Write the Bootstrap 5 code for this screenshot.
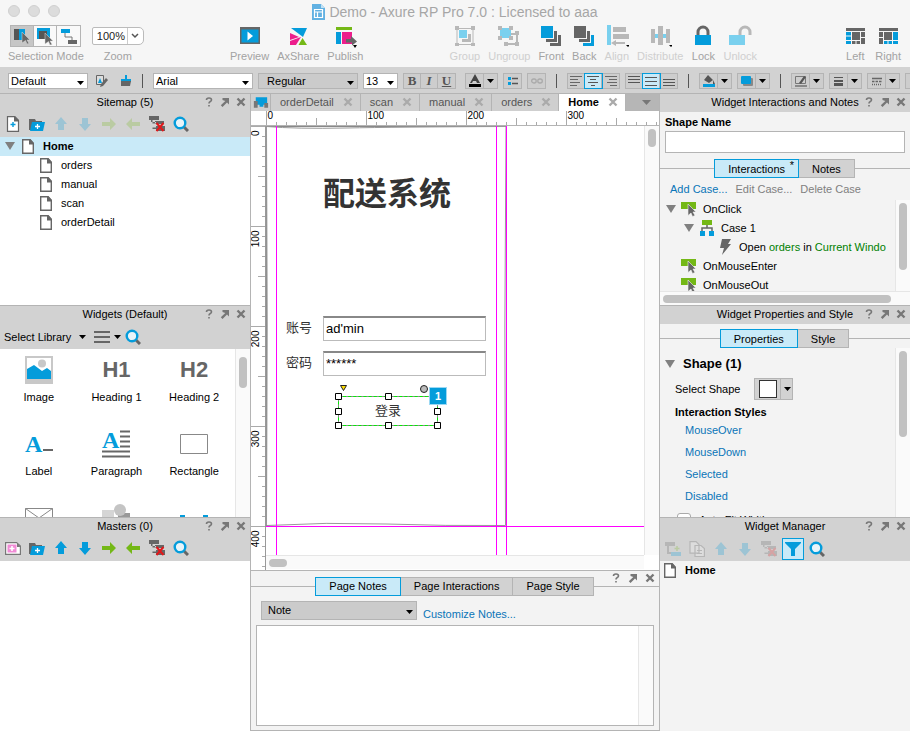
<!DOCTYPE html>
<html lang="en">
<head>
<meta charset="utf-8">
<meta name="viewport" content="width=device-width, initial-scale=1">
<title>Demo - Axure RP Pro 7.0</title>
<link href="https://cdn.jsdelivr.net/npm/bootstrap@5.3.0/dist/css/bootstrap.min.css" rel="stylesheet">
<style>
:root{--line:#b4b4b4;--bar:#d2d2d2;--pane:#f3f3f3;--blue:#049cdb;--pale:#c9eaf8;--ink:#666;--lnk:#0a75b8;--mag:#f0f}
body{font-family:"Liberation Sans","Noto Sans CJK SC",Arial,sans-serif;font-size:11px;line-height:14px;color:#000;background:var(--pane);height:100vh;overflow:hidden}
button,input,select,textarea{font:inherit;color:inherit;border-radius:0}
button{background:none;border:0;padding:0;line-height:14px}
svg{display:block;flex:none}
a{color:var(--lnk);text-decoration:none}
.i12{width:12px;height:12px}.i16{width:16px;height:16px}.i24{width:24px;height:24px}.i28{width:28px;height:28px;overflow:visible}
.pg{width:12px;height:15px}.tri{width:10px;height:8px}.arr{width:7px;height:4px}
/* window top */
.topbar{background:#f6f6f6}
.titleline{height:23px;font-size:14px;color:#a6a6a6}
.dots{left:8px;top:5px}
.dots span{width:12px;height:12px;border-radius:50%;background:#dcdcdc;border:1px solid #d0d0d0}
.tools{height:44px;padding:2px 9px 0 8px;color:#a3a3a3}
.tool{display:flex;flex-direction:column;align-items:center;height:40px}
.tool.off{color:#cfcfcf}
.seg{border:1px solid var(--line);height:22px;margin-bottom:2px}
.seg button{width:23px;height:20px;border-right:1px solid var(--line);background:#f9f9f9;display:grid;place-items:center}
.seg button:last-child{border:0}.seg .sel{background:#c6c6c6}
.sel-box{appearance:none;border:1px solid var(--line);background:#fff url("data:image/svg+xml,%3Csvg xmlns='http://www.w3.org/2000/svg' width='7' height='4'%3E%3Cpath d='M0 0h7L3.500 4z'/%3E%3C/svg%3E") no-repeat right 3px top 7px;padding:0 12px 0 2px;height:16px;line-height:14px}
.zoomsel{height:18px;width:52px;border:1px solid #bbb;border-radius:2px 5px 5px 2px;color:#222;padding:0 0 0 4px;line-height:16px;background:#fff url("data:image/svg+xml,%3Csvg xmlns='http://www.w3.org/2000/svg' width='16' height='16'%3E%3Cpath d='M.5 0v16' stroke='%23ccc'/%3E%3Cpath d='M5 6l3 3 3-3' fill='none' stroke='%23555' stroke-width='1.500'/%3E%3C/svg%3E") no-repeat right 0 top 0;margin:2px 0 4px;appearance:none}
/* format strip */
.fmt{height:26px;background:var(--bar);padding:1px 0 0 8px;gap:5px;overflow:hidden}
.gray{background-color:#cbcbcb}
.w80{width:80px}.w100{width:100px}.w35{width:35px}.w156{width:156px}
.vr1{width:1px;height:14px;background:#555;margin:0 5px}
.bg1{border:1px solid var(--line);height:16px;background:#cdcdcd}
.bg1 button{width:17px;height:14px;display:grid;place-items:center;border-right:1px solid var(--line);font-family:"Liberation Serif",serif;font-weight:bold;font-size:13px;color:#555}
.bg1 button:last-child{border-right:0}
.bg1 .lg{width:18px}.bg1 .ar{width:13px}
.bg1 .on{background:var(--pale);outline:1px solid var(--blue)}
/* panels */
.work{display:grid;grid-template-columns:minmax(190px,250fr) minmax(280px,409fr) minmax(200px,251fr);min-height:0}
.colm{display:flex;flex-direction:column;min-width:0;min-height:0}
.colm+.colm{border-left:1px solid var(--line)}
.pnl{flex:212 1 0;min-height:0;display:flex;flex-direction:column;border-top:1px solid var(--line);overflow:hidden}
.pnl:last-child{flex-grow:214}
.ph{display:grid;grid-template-columns:1fr auto 1fr;align-items:center;height:18px;padding-bottom:2px;background:var(--bar);flex:none}
.ph h2{grid-column:2;font-size:11px;line-height:14px;margin:0;font-weight:400;white-space:nowrap}
.wt{display:flex;justify-content:flex-end;gap:6px;padding-right:4px;color:#777}
.wt svg{width:10px;height:10px}
.tb{height:25px;background:var(--bar);flex:none;padding-left:1px}
.tb button{width:24px;height:24px;display:grid;place-items:center}
.libbar button{height:20px}
.dim{opacity:.25}
.tree{list-style:none;margin:0;padding:0}
.tree li{display:flex;align-items:center;height:19px;padding-bottom:1px;white-space:nowrap}
.lv0{background:var(--pale);padding-left:5px}.lv0 .pg{margin:0 9px 0 7px}
.lv1{padding-left:40px}.lv1 .pg,.wm .pg{margin-right:9px}.wm{padding-left:4px}
.wgrid{display:grid;grid-template-columns:repeat(3,1fr);flex:1;padding-right:2px;overflow:hidden;align-content:start}
.wgrid div{height:74px;padding-top:7px;display:flex;flex-direction:column;align-items:center;gap:6px}
.hh{height:28px;font:bold 22px/28px "Liberation Sans",sans-serif;color:var(--ink)}
.vs{width:15px;flex:none;background:#fafafa;border-left:1px solid #e6e6e6;padding:3px 3px}
.vs span,.hs span{display:block;border-radius:4px;background:#c1c1c1}
.vs span{width:8px}.hs{height:14px;flex:none;background:#fafafa;border-top:1px solid #e6e6e6;padding:3px}
.hs span{height:8px}
.tabsline{display:flex;justify-content:center;position:relative;flex:none}
.tabsline::before{content:"";position:absolute;left:0;right:0;top:9px;border-top:1px solid var(--line)}
.tabsline button{position:relative;height:19px;border:1px solid var(--line);background:var(--bar);padding:0 13px;margin-left:-1px}
.tabsline .on{background:var(--pale);border-color:var(--blue);z-index:1}
.star{position:absolute;right:4px;top:-2px}
.nm{padding:3px 5px 0}
.name-in{height:22px;border:1px solid var(--line);background:#fff;margin:2px 5px 6px;flex:none}
.acts{height:22px;padding-left:10px;color:#808080}
.ev svg.tri{margin:0 5px 0 6px}.ev .i16{margin-right:6px}.e1{padding-left:18px}.e2{padding-left:57px}.ev .e3{padding-left:21px}
.grn{color:#008000}.pt5{margin-top:5px}
.fs13{font-size:13px}
.sh{height:32px;padding-left:5px}.ind{padding-left:15px}.selrow{height:18px;gap:14px}
.lk{padding-left:25px}
.lk li{height:22px;display:flex;align-items:center}
.shp{border:1px solid var(--line);background:var(--bar);height:22px;width:39px}
.shp i{width:18px;height:18px;border:1px solid #333;background:#fff;margin-left:4px}
.shp b{width:1px;height:20px;background:var(--line);margin:0 3px}
.h6x{font-size:11px;line-height:14px;margin:0;padding-top:7px;font-weight:bold}
.afw{padding-left:17px;height:26px}
.chk{width:14px;height:14px;margin:0;appearance:none;border:1px solid #aaa;border-radius:3px;background:#fff}
.tb .filt{border:1px solid var(--blue);background:var(--pale);height:22px;width:22px;margin:0 1px}
/* document tabs and canvas */
.edge{border-top:1px solid var(--line)}
.dtabs{height:17px;background:#b6b6b6;color:#555;flex:none}
.dtab{display:flex;align-items:center;gap:9px;height:17px;padding:0 7px 1px 9px;background:#cfcfcf;border-right:1px solid var(--line)}
.dtab svg{width:10px;height:10px;color:#aaa}
.dtab .dev{width:19px;height:14px}
.dtab.cur{background:#fff;color:#000;font-weight:bold}
.cv{display:grid;grid-template:15px 1fr 15px/15px 1fr 15px;flex:1;min-height:0;background:#fff}
.rh{grid-column:1/4;border-bottom:1px solid var(--line);width:100%;height:15px}
.rv{border-right:1px solid #999;width:15px;height:100%;grid-row:2/4;min-height:0}
.stage{position:relative;overflow:hidden;min-width:0;min-height:0;color:#333}
.stage>*{position:absolute}
.gv{width:1px;top:0;bottom:0;background:var(--mag)}.gh{height:1px;left:0;right:0;top:400px;background:var(--mag)}
.x10{left:10px}.x230{left:230px}.x240{left:240px}
.sys{left:57px;top:42px;font:bold 32px/46px "Noto Sans CJK SC",sans-serif;margin:0;white-space:nowrap}
.fl{left:20px;font-size:13px;line-height:18px}
.fi{left:57px;width:163px;height:25px;border:1px solid #bbb;border-top:2px solid #888;background:#fff;padding:0 2px 2px;font-size:13px;color:#000}
.r1{top:190px}.r2{top:225px}.l1{top:193px}.l2{top:228px}
.login{left:72px;top:270px;width:100px;height:30px;font-size:13px;border:1px dashed #0e0;background:linear-gradient(#fff,#fff) padding-box,#888 border-box}
.hand{left:68px;top:258px}
.note1{left:163px;top:261px;width:18px;height:18px;background:var(--blue);border:1px solid #9bd8f3;color:#fff;font-weight:bold;line-height:16px;text-align:center}
.notes{flex:none;height:25.300%;background:var(--pane);border-top:1px solid var(--line);border-bottom:1px solid var(--line);position:relative}
.notes .wt{position:absolute;right:0;top:2px;gap:7px}
.nt{padding-top:6px}.nt::before{top:15px}
.nrow{padding-left:10px;gap:6px;margin-top:5px;height:19px}.nrow a{margin-top:6px}
.nsel{height:19px;padding-left:6px;background-position:right 3px top 8px}
.ntext{display:flex;border:1px solid var(--line);background:#fff;margin:5px 5px 4px;flex:1;min-height:0}
.ntext textarea{flex:1;border:0;resize:none;background:#fff;outline:0;min-width:0}
</style>
</head>
<body class="d-flex flex-column">
<svg width="0" height="0" class="position-absolute" aria-hidden="true">
<symbol id="q" viewBox="0 0 10 10"><path d="M2.500 3Q2.500 1 5 1T7.500 3Q7.500 4 6 4.800Q5 5.300 5 6.500M5 8v1.500" fill="none" stroke="currentColor" stroke-width="1.600"/></symbol>
<symbol id="pop" viewBox="0 0 10 10"><path d="M2.500 1H9v6.500L7 5.500 2.500 10 .800 8.300 5.300 4 2.500 3z" fill="currentColor"/></symbol>
<symbol id="x" viewBox="0 0 10 10"><path d="M1.500 1.500l7 7M8.500 1.500l-7 7" stroke="currentColor" stroke-width="2.400"/></symbol>
<symbol id="tri" viewBox="0 0 10 8"><path d="M0 0h10L5 8z" fill="#808080"/></symbol>
<symbol id="arr" viewBox="0 0 7 4"><path d="M0 0h7L3.500 4z"/></symbol>
<symbol id="page" viewBox="0 0 12 15"><path d="M.700.700h7L11.300 4.500v9.800H.700z" fill="#fff" stroke="#666" stroke-width="1.400"/><path d="M7 0h1.500L12 4v1.500H7z" fill="#666"/></symbol>
<symbol id="addpage" viewBox="0 0 16 16"><path d="M2.500.700h7l4 4v10.600h-11z" fill="#fff" stroke="#666" stroke-width="1.200"/><path d="M9 0h1l4 4v1.500H9z" fill="#666"/><path d="M8 6v5M5.500 8.500h5" stroke="#049cdb" stroke-width="1.400"/></symbol>
<symbol id="folder" viewBox="0 0 16 16"><path d="M0 3h6l1 2h6v9H0z" fill="#666"/><path d="M3 6h13l-2 9H1z" fill="#049cdb"/><path d="M8.500 8v5M6 10.500h5" stroke="#fff" stroke-width="1.300"/></symbol>
<symbol id="up" viewBox="0 0 16 16"><path d="M8 1l6 7h-3v6H5V8H2z" fill="#049cdb"/></symbol>
<symbol id="dn" viewBox="0 0 16 16"><path d="M8 15L2 8h3V2h6v6h3z" fill="#049cdb"/></symbol>
<symbol id="rt" viewBox="0 0 16 16"><path d="M15 8L9 14v-4H1V6h8V2z" fill="#74b816"/></symbol>
<symbol id="lt" viewBox="0 0 16 16"><path d="M1 8l6-6v4h8v4H7v4z" fill="#74b816"/></symbol>
<symbol id="del" viewBox="0 0 16 16"><path d="M0 0h10v4H0zM2 4h1.500v9H7v-1.500H3.500V7.500H7V6H2zM6 5h9v3H6zM7 10h9v5H7z" fill="#666"/><path d="M7.500 7l7 8M14.500 7l-7 8" stroke="#e3171a" stroke-width="2"/></symbol>
<symbol id="find" viewBox="0 0 16 16"><path d="M10.500 10.500l4.500 4.500" stroke="#666" stroke-width="3"/><circle cx="7" cy="7" r="5.300" fill="#e8f4f9" stroke="#049cdb" stroke-width="2.400"/></symbol>
<symbol id="addm" viewBox="0 0 16 16"><path d="M.600 2.600h11l3.800 3.500v8.300H.600z" fill="#fff" stroke="#777" stroke-width="1.200"/><path d="M2.500 4.500h9v8h-9z" fill="#f08bd5"/><path d="M12 3v4h3.500z" fill="#777"/><path d="M7 6v5M4.500 8.500h5" stroke="#fff" stroke-width="1.600"/></symbol>
<symbol id="evt" viewBox="0 0 16 16"><path d="M0 1h15v7H0z" fill="#74b816"/><path d="M7 3l8 8h-3l2 3.500-2.500 1-1.500-3.500-3 2.500z" fill="#666" stroke="#f3f3f3" stroke-width=".6"/></symbol>
<symbol id="case" viewBox="0 0 16 16"><path d="M3 0h10v5H3z" fill="#74b816"/><path d="M8 5v3M3 12V8h10v4" fill="none" stroke="#666" stroke-width="1.500"/><path d="M1 11h5v5H1zM10 11h5v5h-5z" fill="#049cdb"/></symbol>
<symbol id="bolt" viewBox="0 0 16 16"><path d="M5 0h9l-3 5h3L5 16l2-7H3z" fill="#666"/></symbol>
<symbol id="cur" viewBox="0 0 10 12"><path d="M1 0l8 8H6l2 3.500-2 .5-1.500-3.500L1 11z" fill="#666" stroke="#ddd" stroke-width=".5"/></symbol>
</svg>

<header class="topbar flex-shrink-0">
  <div class="titleline position-relative d-flex justify-content-center align-items-center gap-1">
    <div class="dots position-absolute d-flex gap-2"><span></span><span></span><span></span></div>
    <svg width="13" height="16" viewBox="0 0 13 16"><path d="M0 0h9l4 4v12H0z" fill="#62b1e2"/><path d="M2.500 5.500h8v8h-8zM2.500 8h8M5.500 8v5.500" fill="none" stroke="#fff" stroke-width="1.200"/><path d="M9 0v4h4z" fill="#c3e2f4"/></svg>
    <span>Demo - Axure RP Pro 7.0 : Licensed to aaa</span>
  </div>
  <div class="tools d-flex justify-content-between">
    <div class="d-flex gap-2">
      <div class="tool"><div class="seg d-flex">
        <button class="sel" aria-label="Select intersected"><svg width="18" height="18" viewBox="0 0 18 18"><path d="M1 2h7v11H1z" fill="#555"/><path d="M6 2h6v11H6z" fill="#049cdb"/><use href="#cur" x="8" y="5" width="10" height="12"/></svg></button>
        <button aria-label="Select contained"><svg width="18" height="18" viewBox="0 0 18 18"><path d="M1 1h13v11H1z" fill="#049cdb"/><path d="M3 4h8v8H3z" fill="#555"/><use href="#cur" x="8" y="6" width="10" height="12"/></svg></button>
        <button aria-label="Connector"><svg width="18" height="18" viewBox="0 0 18 18"><path d="M1 2h9v4H1z" fill="#049cdb"/><path d="M5 6v4h7v4" fill="none" stroke="#777"/><path d="M8 13h9v4H8z" fill="#666"/></svg></button></div>
        <span>Selection Mode</span></div>
      <div class="tool"><select class="zoomsel" id="zm"><option>100%</option></select><label for="zm">Zoom</label></div>
    </div>
    <div class="d-flex gap-2">
      <button class="tool"><svg class="i24" viewBox="0 0 24 24"><path d="M2 2h20v17H2z" fill="#666"/><path d="M3.500 4.500h17v13h-17z" fill="#049cdb"/><path d="M9.500 6.500l5.500 4.500-5.500 4.500z" fill="#fff"/></svg>Preview</button>
      <button class="tool"><svg class="i24" viewBox="0 0 24 24"><path d="M5 3h16l-4 9z" fill="#049cdb"/><path d="M4 8l9 4-9 3zM4 20v-4l11-4-5 8z" fill="#ec1e8c"/><path d="M16.500 13l-4 7H21z" fill="#74b816"/></svg>AxShare</button>
      <button class="tool"><svg class="i24" viewBox="0 0 24 24"><path d="M3 2h16v3H3z" fill="#74b816"/><path d="M3 7h5v12H3z" fill="#049cdb"/><path d="M9 7h10v12H9z" fill="#ec1e8c"/><path d="M13 14h5v-3l6 5.500-5 4v-3h-6z" fill="#666"/><path d="M20 20h4l-2 3z"/></svg>Publish</button>
    </div>
    <div class="d-flex gap-2">
      <button class="tool off" disabled><svg class="i24" viewBox="0 0 24 24"><path d="M4 3.500h16v16H4z" fill="none" stroke="#b8b8b8"/><path d="M2 1h4v4H2zM18 1h4v4h-4zM2 18h4v3H2zM18 18h4v3h-4zM15 9h3v8H9v-3h6z" fill="#b8b8b8"/><path d="M6 5h8v8H6z" fill="#7ad0ee"/></svg>Group</button>
      <button class="tool off" disabled><svg class="i24" viewBox="0 0 24 24"><path d="M3 3h11v10H3z" fill="#7ad0ee"/><path d="M1 1h4v4H1zM12 1h4v4h-4zM1 11h4v4H1zM12 11h4v4h-4zM18 6h4v4h-4zM7 17h4v4H7zM18 17h4v4h-4zM11 18h7v2h-7zM19 9h2v9h-2zM14 8h4v2h-4z" fill="#b8b8b8"/></svg>Ungroup</button>
      <button class="tool"><svg class="i24" viewBox="0 0 24 24"><path d="M2 1h12v12H2z" fill="#049cdb"/><path d="M15 6h3v11H7v-3h8zM19 10h3v11H11v-3h8z" fill="#666"/></svg>Front</button>
      <button class="tool"><svg class="i24" viewBox="0 0 24 24"><path d="M2 1h12v12H2zM15 6h3v11H7v-3h8z" fill="#666"/><path d="M19 10h3v11H11v-3h8z" fill="#049cdb"/></svg>Back</button>
      <button class="tool off" disabled><svg class="i24" viewBox="0 0 24 24"><path d="M2 0h4v20H2z" fill="#7ad0ee"/><path d="M8 2h13v5H8zM8 9h16v5H8zM6 18l5-3v2h9v2h-9v2z" fill="#b8b8b8"/><path d="M21 20h4l-2 2z"/></svg>Align</button>
      <button class="tool off" disabled><svg class="i24" viewBox="0 0 24 24"><path d="M3 9h18v4H3z" fill="#7ad0ee"/><path d="M3 4h4v14H3zM10 1h5v19h-5zM18 4h4v14h-4z" fill="#b8b8b8"/><path d="M21 20h4l-2 2z"/></svg>Distribute</button>
      <button class="tool"><svg class="i24" viewBox="0 0 24 24"><path d="M7 11V7a5 5 0 0 1 10 0v4" fill="none" stroke="#666" stroke-width="3"/><path d="M4 10h16v10H4z" fill="#049cdb"/></svg>Lock</button>
      <button class="tool off" disabled><svg class="i24" viewBox="0 0 24 24"><path d="M12 11V7a5 5 0 0 1 10 0v3" fill="none" stroke="#b8b8b8" stroke-width="3"/><path d="M1 10h16v10H1z" fill="#7ad0ee"/></svg>Unlock</button>
    </div>
    <div class="d-flex gap-2">
      <button class="tool"><svg class="i24" viewBox="0 0 24 24"><path d="M3 3h19v3H3zM9 7h8v8H9zM18 7h4v5h-4zM18 13h4v6h-4zM9 16h3.500v3H9zM13.500 16H17v3h-3.500z" fill="#666"/><path d="M3 7h5v3.500H3zM3 11.500h5V15H3zM3 16h5v3H3z" fill="#049cdb"/></svg>Left</button>
      <button class="tool"><svg class="i24" viewBox="0 0 24 24"><path d="M3 3h19v3H3zM3 7h4v5H3zM3 13h4v6H3zM8 7h8v8H8z" fill="#666"/><path d="M17 7h5v8h-5zM8 16h3.500v3H8zM12.500 16H16v3h-3.500zM17 16h5v3h-5z" fill="#049cdb"/></svg>Right</button>
    </div>
  </div>
</header>

<div class="fmt d-flex flex-shrink-0 align-items-center">
  <div class="d-flex align-items-center gap-1 flex-shrink-0">
  <select class="sel-box w80" aria-label="Style"><option>Default</option></select>
  <button class="ms-1" aria-label="Edit style"><svg class="i12" viewBox="0 0 12 12"><path d="M.500.500h7v9h-7z" fill="#ddd" stroke="#666"/><path d="M4 12l1-3 5-6 2 2-5 6z" fill="#666"/><path d="M2 8l2-5 2 5z" fill="#049cdb"/></svg></button>
  <button class="ms-2" aria-label="Format painter"><svg class="i12" viewBox="0 0 12 12"><path d="M5 0h2v4h4v3H1V4h4z" fill="#049cdb"/><path d="M1 6h10l-1 5H1z" fill="#666"/></svg></button>
  </div>
  <span class="vr1 flex-shrink-0"></span>
  <select class="sel-box w100 flex-shrink-0" aria-label="Font"><option>Arial</option></select>
  <select class="sel-box gray w100 flex-shrink-0" aria-label="Weight"><option>&nbsp; Regular</option></select>
  <select class="sel-box w35 flex-shrink-0" aria-label="Size"><option>13</option></select>
  <div class="bg1 d-flex flex-shrink-0"><button>B</button><button class="fst-italic">I</button><button class="text-decoration-underline">U</button></div>
  <div class="bg1 d-flex flex-shrink-0 ms-1"><button class="lg" aria-label="Text color"><svg width="14" height="13" viewBox="0 0 14 13"><path d="M7 0l5 9H9L8 7H5L4 9H2z" fill="#444"/><path d="M1 10h12v3H1z"/></svg></button><button class="ar" aria-label="More"><svg class="arr"><use href="#arr"/></svg></button></div>
  <div class="bg1 d-flex flex-shrink-0"><button aria-label="Bullets"><svg class="i12" viewBox="0 0 12 12"><path d="M1 2h3v3H1zM1 7h3v3H1z" fill="#049cdb"/><path d="M5 3.500h6M5 8.500h6" stroke="#555" stroke-width="1.500"/></svg></button></div>
  <div class="bg1 d-flex flex-shrink-0"><button aria-label="Link"><svg class="i12" viewBox="0 0 12 12"><rect x=".7" y="4" width="4.500" height="4" rx="2" fill="none" stroke="#aaa" stroke-width="1.300"/><rect x="6.800" y="4" width="4.500" height="4" rx="2" fill="none" stroke="#aaa" stroke-width="1.300"/></svg></button></div>
  <span class="vr1 flex-shrink-0"></span>
  <div class="bg1 d-flex flex-shrink-0"><button aria-label="Align left"><svg class="i12"><path d="M0 1.500h12M0 4.500h8M0 7.500h10M0 10.500h7" stroke="#666"/></svg></button><button class="on" aria-label="Align center"><svg class="i12"><path d="M0 1.500h12M3 4.500h6M1 7.500h10M4 10.500h4" stroke="#555"/></svg></button><button aria-label="Align right"><svg class="i12"><path d="M0 1.500h12M4 4.500h8M2 7.500h10M5 10.500h7" stroke="#666"/></svg></button></div>
  <div class="bg1 d-flex flex-shrink-0"><button aria-label="Top"><svg class="i12"><path d="M0 1.500h12M0 4.500h12M0 7.500h12" stroke="#555"/></svg></button><button class="on" aria-label="Middle"><svg class="i12"><path d="M0 2.500h12M0 6.500h12M0 10.500h12" stroke="#555"/></svg></button><button aria-label="Bottom"><svg class="i12"><path d="M0 4.500h12M0 7.500h12M0 10.500h12" stroke="#555"/></svg></button></div>
  <span class="vr1 flex-shrink-0"></span>
  <div class="bg1 d-flex flex-shrink-0"><button class="lg" aria-label="Fill"><svg class="i12" viewBox="0 0 12 12"><path d="M5 0l5 5-4 3-5-3zM10 5l2 4H10z" fill="#555"/><path d="M0 9h12v3H0z" fill="#049cdb"/></svg></button><button class="ar" aria-label="More"><svg class="arr"><use href="#arr"/></svg></button></div>
  <div class="bg1 d-flex flex-shrink-0"><button class="lg" aria-label="Shadow"><svg class="i12" viewBox="0 0 12 12"><rect x="2" y="3" width="10" height="8" rx="1" fill="#888"/><rect y="1" width="10" height="8" rx="1" fill="#049cdb"/></svg></button><button class="ar" aria-label="More"><svg class="arr"><use href="#arr"/></svg></button></div>
  <span class="vr1 flex-shrink-0"></span>
  <div class="bg1 d-flex flex-shrink-0"><button class="lg" aria-label="Line color"><svg class="i12" viewBox="0 0 12 12"><path d="M.500 1.500h10v7H.500z" fill="none" stroke="#777"/><path d="M4 8l5-7 2 1-5 7z" fill="#555"/><path d="M0 10h12v2H0z" fill="#888"/></svg></button><button class="ar" aria-label="More"><svg class="arr"><use href="#arr"/></svg></button></div>
  <div class="bg1 d-flex flex-shrink-0"><button class="lg" aria-label="Line width"><svg class="i12" viewBox="0 0 12 12"><path d="M1 2h9v1H1zM1 5h9v2H1zM1 8h9v3H1z" fill="#555"/></svg></button><button class="ar" aria-label="More"><svg class="arr"><use href="#arr"/></svg></button></div>
  <div class="bg1 d-flex flex-shrink-0"><button class="lg" aria-label="Line style"><svg class="i12" viewBox="0 0 12 12"><path d="M1 3.500h10M1 6.500h2.500m1 0h2.500m1 0h2.500M1 9.500h1m1 0h1m1 0h1m1 0h1m1 0h1" stroke="#666" stroke-width="1.500"/></svg></button><button class="ar" aria-label="More"><svg class="arr"><use href="#arr"/></svg></button></div>
  <div class="bg1 d-flex flex-shrink-0"><button class="lg" aria-label="Arrow style"></button></div>
</div>

<main class="work flex-grow-1">
  <div class="colm">
    <section class="pnl bg-white">
      <div class="ph"><h2>Sitemap (5)</h2><div class="wt"><svg><use href="#q"/></svg><svg><use href="#pop"/></svg><svg><use href="#x"/></svg></div></div>
      <div class="tb d-flex"><button aria-label="Add page"><svg class="i16"><use href="#addpage"/></svg></button><button aria-label="Add folder"><svg class="i16"><use href="#folder"/></svg></button><button aria-label="Up" class="dim"><svg class="i16"><use href="#up"/></svg></button><button aria-label="Down" class="dim"><svg class="i16"><use href="#dn"/></svg></button><button aria-label="Indent" class="dim"><svg class="i16"><use href="#rt"/></svg></button><button aria-label="Outdent" class="dim"><svg class="i16"><use href="#lt"/></svg></button><button aria-label="Delete"><svg class="i16"><use href="#del"/></svg></button><button aria-label="Search"><svg class="i16"><use href="#find"/></svg></button></div>
      <ul class="tree">
        <li class="fw-bold lv0"><svg class="tri"><use href="#tri"/></svg><svg class="pg"><use href="#page"/></svg>Home</li>
        <li class="lv1"><svg class="pg"><use href="#page"/></svg>orders</li>
        <li class="lv1"><svg class="pg"><use href="#page"/></svg>manual</li>
        <li class="lv1"><svg class="pg"><use href="#page"/></svg>scan</li>
        <li class="lv1"><svg class="pg"><use href="#page"/></svg>orderDetail</li>
      </ul>
    </section>
    <section class="pnl bg-white">
      <div class="ph"><h2>Widgets (Default)</h2><div class="wt"><svg><use href="#q"/></svg><svg><use href="#pop"/></svg><svg><use href="#x"/></svg></div></div>
      <div class="tb d-flex align-items-center ps-1 libbar"><button class="d-flex align-items-center w-auto gap-2">Select Library<svg class="arr"><use href="#arr"/></svg></button><button class="d-flex align-items-center w-auto gap-1 ms-2" aria-label="Library menu"><svg width="16" height="14"><path d="M0 2h16M0 7h16M0 12h16" stroke="#666" stroke-width="2"/></svg><svg class="arr"><use href="#arr"/></svg></button><button aria-label="Search"><svg class="i16"><use href="#find"/></svg></button></div>
      <div class="d-flex flex-grow-1 overflow-hidden">
        <div class="wgrid">
          <div><svg class="i28" viewBox="0 0 28 28"><path d="M0 0h28v28H0z" fill="#c8c8c8"/><path d="M2 2h24v21H2z" fill="#fff"/><circle cx="17" cy="7.500" r="4" fill="#c8c8c8"/><path d="M2 13l7-4 8 6 5-3 4 3v8H2z" fill="#049cdb"/></svg>Image</div>
          <div><span class="hh">H1</span>Heading 1</div>
          <div><span class="hh">H2</span>Heading 2</div>
          <div><svg class="i28" viewBox="0 0 28 28"><text x="0" y="22" font-family="Liberation Serif" font-weight="bold" font-size="24" fill="#049cdb">A</text><path d="M18 19h10v2H18z" fill="#666"/></svg>Label</div>
          <div><svg class="i28" viewBox="0 0 28 28"><text x="0" y="18" font-family="Liberation Serif" font-weight="bold" font-size="24" fill="#049cdb">A</text><path d="M18 1.500h10M18 6.500h10M18 11.500h10M18 16.500h10M0 21.500h28M0 26.500h28" stroke="#666" stroke-width="2"/></svg>Paragraph</div>
          <div><svg class="i28" viewBox="0 0 28 28"><path d="M.500 4.500h27v19H.500z" fill="#fff" stroke="#888"/></svg>Rectangle</div>
          <div><svg class="i28" viewBox="0 0 28 28"><path d="M.500 4.500h27v18H.500zM.500 4.500L14 14l13.500-9.500" fill="#fff" stroke="#888"/></svg></div>
          <div><svg class="i28" viewBox="0 0 28 28"><path d="M0 6h12v16H0z" fill="#d5d5d5"/><path d="M16 9h12v13H16z" fill="#999"/><circle cx="18" cy="6" r="6" fill="#c4c4c4"/></svg></div>
          <div><svg class="i28" viewBox="0 0 28 28"><path d="M0 11h5v8H0zM23 11h5v8h-5z" fill="#049cdb"/></svg></div>
        </div>
        <div class="vs pt-2"><span style="height:31px"></span></div>
      </div>
    </section>
    <section class="pnl bg-white">
      <div class="ph"><h2>Masters (0)</h2><div class="wt"><svg><use href="#q"/></svg><svg><use href="#pop"/></svg><svg><use href="#x"/></svg></div></div>
      <div class="tb d-flex"><button aria-label="Add master"><svg class="i16"><use href="#addm"/></svg></button><button aria-label="Add folder"><svg class="i16"><use href="#folder"/></svg></button><button aria-label="Up"><svg class="i16"><use href="#up"/></svg></button><button aria-label="Down"><svg class="i16"><use href="#dn"/></svg></button><button aria-label="Indent"><svg class="i16"><use href="#rt"/></svg></button><button aria-label="Outdent"><svg class="i16"><use href="#lt"/></svg></button><button aria-label="Delete"><svg class="i16"><use href="#del"/></svg></button><button aria-label="Search"><svg class="i16"><use href="#find"/></svg></button></div>
    </section>
  </div>

  <div class="colm">
    <div class="d-flex flex-column flex-grow-1 overflow-hidden edge">
      <div class="dtabs d-flex">
        <div class="dtab px-0"><svg class="dev" viewBox="0 0 20 14"><path d="M5 2h12v8H5zM9 10h4v2H9z" fill="#049cdb"/><path d="M3 6h4v7H3zM14 8h4v5h-4z" fill="#777"/></svg></div>
        <div class="dtab">orderDetail<svg><use href="#x"/></svg></div><div class="dtab">scan<svg><use href="#x"/></svg></div><div class="dtab">manual<svg><use href="#x"/></svg></div><div class="dtab">orders<svg><use href="#x"/></svg></div><div class="dtab cur">Home<svg><use href="#x"/></svg></div>
        <button class="ms-auto px-2" aria-label="Tab list"><svg width="9" height="5"><path d="M0 0h9L4.500 5z" fill="#777"/></svg></button>
      </div>
      <div class="cv">
        <svg class="rh" id="rh" aria-hidden="true"></svg>
        <svg class="rv" id="rv" aria-hidden="true"></svg>
        <div class="stage">
          <svg width="242" height="402"><path d="M0 .500h240M.500 0v400" stroke="#888"/><path d="M.500.500Q30 3 80 2T240 .500Q238 200 239.500 399.500Q180 400 120 398T.500 399.500Q2 200 .500.500z" fill="none" stroke="#999"/></svg>
          <div class="gv x10"></div><div class="gv x230"></div><div class="gv x240"></div><div class="gh"></div>
          <h1 class="sys">配送系统</h1>
          <label class="fl l1" for="acc">账号</label><input class="fi r1" id="acc" value="ad'min">
          <label class="fl l2" for="pw">密码</label><input class="fi r2" id="pw" value="******">
          <button class="login">登录</button>
          <svg class="hand" width="110" height="46" aria-hidden="true"><path d="M6.500 1.500h6l-3 5z" fill="#fd0" stroke="#222"/><circle cx="90" cy="5" r="3.500" fill="#bbb" stroke="#222"/><g fill="#fff" stroke="#000"><path d="M1.500 9.500h6v6h-6zM51.500 9.500h6v6h-6zM1.500 24.500h6v6h-6zM100.500 24.500h6v6h-6zM1.500 38.500h6v6h-6zM51.500 38.500h6v6h-6zM100.500 38.500h6v6h-6z"/></g></svg>
          <div class="note1">1</div>
        </div>
        <div class="vs"><span style="height:18px"></span></div>
        <div class="hs"><span style="width:18px"></span></div>
      </div>
    </div>
    <section class="notes d-flex flex-column">
      <div class="tabsline nt"><button class="on">Page Notes</button><button>Page Interactions</button><button>Page Style</button></div>
      <div class="wt"><svg><use href="#q"/></svg><svg><use href="#pop"/></svg><svg><use href="#x"/></svg></div>
      <div class="d-flex nrow"><select class="sel-box gray w156 nsel" aria-label="Note field"><option>Note</option></select><a href="#">Customize Notes...</a></div>
      <div class="ntext"><textarea aria-label="Note text"></textarea><div class="vs"></div></div>
    </section>
  </div>

  <div class="colm">
    <section class="pnl">
      <div class="ph"><h2>Widget Interactions and Notes</h2><div class="wt"><svg><use href="#q"/></svg><svg><use href="#pop"/></svg><svg><use href="#x"/></svg></div></div>
      <label class="fw-bold nm" for="sn">Shape Name</label>
      <input class="name-in" id="sn">
      <div class="tabsline"><button class="on">Interactions<span class="star">*</span></button><button>Notes</button></div>
      <div class="acts d-flex gap-2 align-items-center flex-shrink-0"><a href="#">Add Case...</a><span>Edit Case...</span><span>Delete Case</span></div>
      <div class="d-flex flex-grow-1 overflow-hidden">
        <ul class="tree ev flex-grow-1 overflow-hidden">
          <li class="e0"><svg class="tri"><use href="#tri"/></svg><svg class="i16"><use href="#evt"/></svg>OnClick</li>
          <li class="e1"><svg class="tri"><use href="#tri"/></svg><svg class="i16"><use href="#case"/></svg>Case 1</li>
          <li class="e2"><svg class="i16"><use href="#bolt"/></svg><span>Open <span class="grn">orders</span> in <span class="grn">Current Windo</span></span></li>
          <li class="e3"><svg class="i16"><use href="#evt"/></svg>OnMouseEnter</li>
          <li class="e3"><svg class="i16"><use href="#evt"/></svg>OnMouseOut</li>
        </ul>
        <div class="vs"><span style="height:67px"></span></div>
      </div>
      <div class="hs"><span style="width:93.500%"></span></div>
    </section>
    <section class="pnl">
      <div class="ph"><h2>Widget Properties and Style</h2><div class="wt"><svg><use href="#q"/></svg><svg><use href="#pop"/></svg><svg><use href="#x"/></svg></div></div>
      <div class="tabsline pt5"><button class="on">Properties</button><button>Style</button></div>
      <div class="d-flex flex-grow-1 overflow-hidden">
        <div class="flex-grow-1 overflow-hidden">
          <div class="d-flex align-items-center gap-2 fw-bold fs13 sh"><svg class="tri"><use href="#tri"/></svg>Shape (1)</div>
          <div class="d-flex align-items-center ind selrow">Select Shape<button class="shp d-flex align-items-center" aria-label="Choose shape"><i></i><b></b><svg class="arr"><use href="#arr"/></svg></button></div>
          <h3 class="h6x ind">Interaction Styles</h3>
          <ul class="list-unstyled m-0 lk"><li><a href="#">MouseOver</a></li><li><a href="#">MouseDown</a></li><li><a href="#">Selected</a></li><li><a href="#">Disabled</a></li></ul>
          <div class="d-flex align-items-center gap-2 afw"><input type="checkbox" class="chk" id="af"><label for="af">Auto Fit Width</label></div>
        </div>
        <div class="vs"><span style="height:86px"></span></div>
      </div>
    </section>
    <section class="pnl">
      <div class="ph"><h2>Widget Manager</h2><div class="wt"><svg><use href="#q"/></svg><svg><use href="#pop"/></svg><svg><use href="#x"/></svg></div></div>
      <div class="tb d-flex align-items-center"><button class="dim" aria-label="Add state"><svg class="i16" viewBox="0 0 16 16"><path d="M0 1h10v4H0zM2 5h2v6h3v2H2z" fill="#666"/><path d="M6 11h10v4H6z" fill="#049cdb"/><path d="M12 5v5M9.500 7.500h5" stroke="#74b816" stroke-width="1.500"/></svg></button><button class="dim" aria-label="Duplicate"><svg class="i16" viewBox="0 0 16 16"><path d="M1 .600h6l3 3v8.500H1zM6 4.500h6l3.400 3v8H6z" fill="#fff" stroke="#666" stroke-width="1.200"/><path d="M8 9.500h5M8 12.500h5" stroke="#666"/></svg></button><button class="dim" aria-label="Up"><svg class="i16"><use href="#up"/></svg></button><button class="dim" aria-label="Down"><svg class="i16"><use href="#dn"/></svg></button><button class="dim" aria-label="Delete"><svg class="i16"><use href="#del"/></svg></button><button class="filt" aria-label="Filter"><svg class="i16" viewBox="0 0 16 16"><path d="M0 1h16v1L10 8v7H6V8L0 2z" fill="#049cdb"/></svg></button><button aria-label="Search"><svg class="i16"><use href="#find"/></svg></button></div>
      <ul class="tree"><li class="fw-bold wm"><svg class="pg"><use href="#page"/></svg>Home</li></ul>
    </section>
  </div>
</main>
<script src="https://cdn.jsdelivr.net/npm/bootstrap@5.3.0/dist/js/bootstrap.bundle.min.js"></script>
<script>
// Draw ruler ticks every 10 units and a number every 100 units, as far as the ruler reaches.
function drawRuler(id,vertical){
  const el=document.getElementById(id),box=el.getBoundingClientRect();
  const size=vertical?box.height:box.width,start=vertical?0:15;
  let d="",t="";
  for(let v=0;start+v<size;v+=10){
    const p=start+v+0.5,len=v%100===0?15:v%50===0?8:4;
    d+=vertical?`M${15-len} ${p}H15`:`M${p} ${15-len}V15`;
    if(v%100===0&&p+24<size)t+=vertical?`<text transform="translate(8 ${p+4}) rotate(-90)" text-anchor="end">${v}</text>`:`<text x="${p+1}" y="8">${v}</text>`;
  }
  el.innerHTML=`<path d="${d}" stroke="#aaa"/><g font-size="10" fill="#000">${t}</g>`;
}
function drawRulers(){drawRuler("rh",false);drawRuler("rv",true);}
drawRulers();
addEventListener("resize",drawRulers);
</script>
</body>
</html>
